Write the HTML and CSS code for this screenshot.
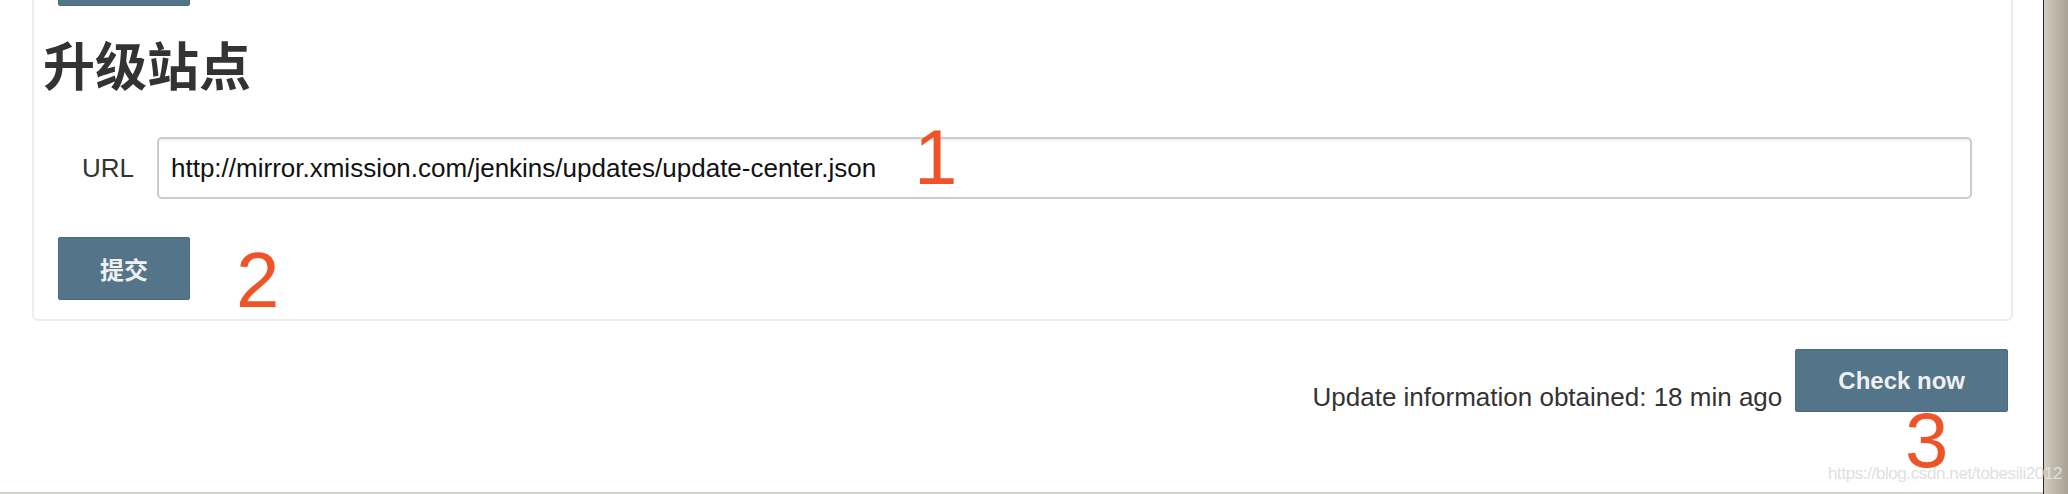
FILE: index.html
```html
<!DOCTYPE html>
<html lang="zh-CN">
<head>
<meta charset="utf-8">
<title>升级站点</title>
<link rel="stylesheet" href="styles.css">
</head>
<body>
<div class="window">
  <main class="page">
    <section class="card">
      <div class="prev-actions"><button class="btn btn-prev" type="button" aria-label="保存"></button></div>
      <h1 class="card-title">升级站点</h1>
      <form class="site-form">
        <div class="field-row">
          <label class="field-label" for="site-url">URL</label>
          <input class="field-input" id="site-url" type="text" value="http://mirror.xmission.com/jenkins/updates/update-center.json">
        </div>
        <div class="form-actions">
          <button class="btn" type="button">提交</button>
        </div>
      </form>
    </section>
    <div class="status-row">
      <span class="status-text">Update information obtained: 18 min ago</span>
      <button class="btn" type="button">Check now</button>
    </div>
    <span class="mark mark-1">1</span>
    <span class="mark mark-2">2</span>
    <span class="mark mark-3">3</span>
  </main>
  <div class="scrollbar"></div>
  <span class="watermark">https://blog.csdn.net/tobesili2012</span>
</div>
</body>
</html>
```

FILE: styles.css
```css
html, body {
  margin: 0;
  padding: 0;
  background: #ffffff;
}

body {
  font-family: "Liberation Sans", "Noto Sans CJK SC", sans-serif;
  color: #333333;
}

.window {
  position: relative;
  display: flex;
  width: 2068px;
  height: 494px;
  overflow: hidden;
}

.page {
  position: relative;
  flex: 1;
  display: flex;
  flex-direction: column;
  background: #ffffff;
  border-bottom: 2px solid #d4d4ce;
  box-sizing: border-box;
  height: 494px;
}

.scrollbar {
  width: 24px;
  border-left: 1px solid #2a2a2a;
  background: linear-gradient(to right, #d2ccbe, #bdb6a8 50%, #aaa396);
}

.card {
  margin: -59px 30px 0 32px;
  border: 2px solid #ececec;
  border-radius: 6px;
  padding: 0 0 19px 9px;
}

.prev-actions {
  padding-left: 15px;
}

.btn {
  font-family: "Liberation Sans", "Noto Sans CJK SC", sans-serif;
  font-size: 24px;
  font-weight: bold;
  color: #f0f0f0;
  background: #54748a;
  border: 1px solid #4c6b80;
  border-radius: 2px;
  height: 63px;
  padding: 0 42px;
  margin: 0;
  cursor: pointer;
}

.btn-prev {
  width: 132px;
  vertical-align: top;
}

.card-title {
  margin: 32px 0 0 0;
  font-family: "Liberation Sans", "Noto Sans CJK SC", sans-serif;
  font-size: 52px;
  line-height: 60px;
  font-weight: bold;
  color: #333333;
}

.site-form {
  margin: 0;
}

.field-row {
  display: flex;
  align-items: center;
  margin-top: 39px;
}

.field-label {
  width: 114px;
  box-sizing: border-box;
  padding-right: 23px;
  text-align: right;
  font-size: 26px;
  color: #333333;
}

.field-input {
  width: 1815px;
  height: 62px;
  box-sizing: border-box;
  border: 2px solid #cccccc;
  border-radius: 5px;
  box-shadow: inset 0 2px 2px rgba(0, 0, 0, 0.06);
  padding: 0 12px;
  font-family: "Liberation Sans", sans-serif;
  font-size: 26px;
  color: #111111;
  background: #ffffff;
  outline: none;
}

.form-actions {
  margin-top: 38px;
  padding-left: 15px;
}

.form-actions .btn {
  padding: 0 41px;
}

.status-row {
  display: flex;
  justify-content: flex-end;
  align-items: flex-end;
  gap: 13px;
  margin: 28px 35px 0 0;
}

.status-text {
  font-size: 26px;
  line-height: 29px;
  color: #333333;
}

.mark {
  position: absolute;
  font-family: "Liberation Sans", sans-serif;
  font-size: 78px;
  line-height: 54px;
  color: #ef5428;
}

.mark-1 { left: 914px; top: 130px; }
.mark-2 { left: 236px; top: 253px; }
.mark-3 { left: 1905px; top: 413px; }

.watermark {
  position: absolute;
  left: 1828px;
  top: 467px;
  font-family: "Liberation Sans", sans-serif;
  font-size: 17px;
  line-height: 14px;
  letter-spacing: -0.4px;
  color: #e0e0e0;
  white-space: nowrap;
}
```
